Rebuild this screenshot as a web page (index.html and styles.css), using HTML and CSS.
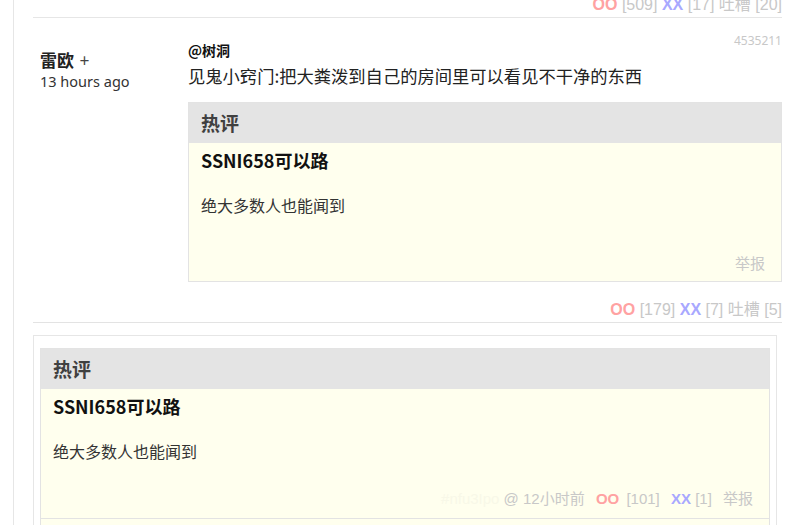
FILE: index.html
```html
<!DOCTYPE html>
<html lang="zh-CN">
<head>
<meta charset="utf-8">
<title>评论</title>
<link rel="stylesheet" href="styles.css">
</head>
<body>
<div class="page">
  <div class="stats top-stats">
    <span class="oo">OO</span> <span class="num">[509]</span> <span class="xx">XX</span> <span class="num">[17]</span> <span class="num">吐槽 [20]</span>
  </div>

  <div class="comment">
    <div class="author">
      <div class="name">雷欧 <span class="plus">+</span></div>
      <div class="time">13 hours ago</div>
    </div>
    <div class="body">
      <div class="head">
        <span class="mention">@树洞</span>
        <span class="cid">4535211</span>
      </div>
      <p class="text">见鬼小窍门:把大粪泼到自己的房间里可以看见不干净的东西</p>
      <div class="hot">
        <div class="hot-title">热评</div>
        <div class="hot-item">
          <div class="hot-author">SSNI658可以路</div>
          <p class="hot-text">绝大多数人也能闻到</p>
          <div class="hot-report">举报</div>
        </div>
      </div>
      <div class="stats row-stats">
        <span class="oo">OO</span> <span class="num">[179]</span> <span class="xx">XX</span> <span class="num">[7]</span> <span class="num">吐槽 [5]</span>
      </div>
    </div>
  </div>

  <div class="panel">
    <div class="hot">
      <div class="hot-title">热评</div>
      <div class="hot-item list-item">
        <div class="hot-author">SSNI658可以路</div>
        <p class="hot-text">绝大多数人也能闻到</p>
        <div class="stats meta">
          <span class="ghost">#nfu3Ipo</span>
          <span class="num">@ 12小时前</span>
          <span class="sep"><span class="oo">OO</span> <span class="num count">[101]</span></span>
          <span class="sep"><span class="xx">XX</span> <span class="num">[1]</span></span>
          <span class="report">举报</span>
        </div>
      </div>
      <div class="hot-item list-item next"></div>
    </div>
  </div>
</div>
</body>
</html>
```

FILE: styles.css
```css
html, body {
  margin: 0;
  padding: 0;
  overflow: hidden;
  background: #fff;
}

body {
  font-family: "Noto Sans", "Noto Sans CJK SC", sans-serif;
  color: #222;
}

.page {
  margin-left: 13px;
  border-left: 1px solid #e6e6e6;
  padding: 0 14px 0 19px;
  min-height: 525px;
}

.stats {
  font-family: "Liberation Sans", "Noto Sans CJK SC", sans-serif;
  font-size: 16px;
  line-height: 20px;
  text-align: right;
  color: #c8c8c8;
}

.oo {
  color: #ffa2a2;
  font-weight: bold;
}

.xx {
  color: #a8a8ff;
  font-weight: bold;
}

.top-stats {
  margin-top: -5px;
  padding-bottom: 2px;
  border-bottom: 1px solid #e6e6e6;
}

.comment {
  display: flex;
  border-bottom: 1px solid #e3e3e3;
}

.author {
  width: 148px;
  padding-left: 7px;
  padding-top: 31px;
}

.name {
  font-family: "Noto Sans CJK SC", sans-serif;
  font-size: 17px;
  font-weight: bold;
  line-height: 22px;
  color: #222;
}

.plus {
  font-weight: normal;
  color: #444;
  margin-left: 2px;
}

.time {
  font-size: 14.5px;
  line-height: 20px;
  color: #333;
}

.body {
  flex: 1;
  padding-top: 16px;
  padding-bottom: 2px;
}

.head {
  display: flex;
  justify-content: space-between;
  align-items: flex-start;
}

.mention {
  font-family: "Noto Sans CJK SC", sans-serif;
  font-size: 14px;
  font-weight: bold;
  line-height: 18px;
  margin-top: 7px;
  color: #111;
}

.cid {
  font-size: 12px;
  line-height: 14px;
  color: #c8c8c8;
}

.text {
  margin: 4px 0 0;
  font-family: "Noto Sans CJK SC", sans-serif;
  font-size: 17.3px;
  line-height: 26px;
  color: #222;
}

.hot {
  border: 1px solid #e3e3e3;
  background: #ffffee;
}

.body .hot {
  margin-top: 13px;
}

.hot-title {
  background: #e4e4e4;
  height: 40px;
  line-height: 40px;
  padding-left: 12px;
  font-family: "Noto Sans CJK SC", sans-serif;
  font-size: 19px;
  font-weight: bold;
  color: #404040;
}

.hot-item {
  padding: 5px 16px 7px 12px;
}

.hot-author {
  font-family: "Noto Sans CJK SC", sans-serif;
  font-size: 18px;
  font-weight: bold;
  line-height: 24px;
  color: #111;
}

.hot-text {
  margin: 21px 0 0;
  font-family: "Noto Sans CJK SC", sans-serif;
  font-size: 16px;
  line-height: 24px;
  color: #333;
}

.hot-report {
  margin-top: 35px;
  text-align: right;
  font-family: "Noto Sans CJK SC", sans-serif;
  font-size: 15px;
  line-height: 22px;
  color: #c8c8c8;
}

.row-stats {
  margin-top: 18px;
}

.panel {
  margin: 12px 5px 0 0;
  border: 1px solid #e6e6e6;
  padding: 12px 6px 0;
}

.list-item {
  padding-bottom: 8px;
}

.meta {
  margin-top: 25px;
  line-height: 22px;
  font-size: 15px;
}

.ghost {
  color: #f8f8e8;
}

.sep,
.report {
  margin-left: 7px;
}

.count {
  margin-left: 3px;
}

.next {
  border-top: 1px solid #e3e3e3;
  height: 60px;
}
```
